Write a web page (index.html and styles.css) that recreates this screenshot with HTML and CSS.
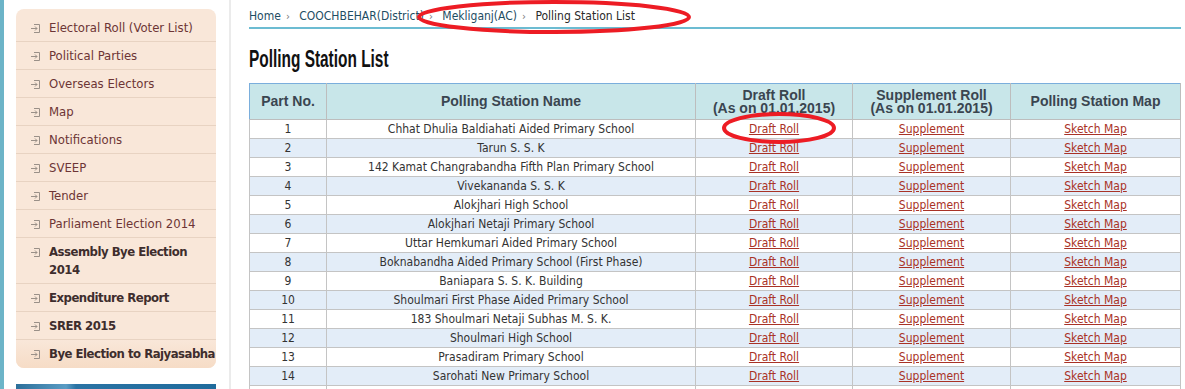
FILE: index.html
```html
<!DOCTYPE html>
<html lang="en">
<head>
  <meta charset="UTF-8">
  <title>Polling Station List</title>
  <link rel="stylesheet" href="styles.css">
</head>
<body>
  <div class="page">
    <div class="side">
      <ul class="menu">
        <li><span class="ico"><svg width="11" height="11" viewBox="0 0 11 11"><path d="M4 1.5H9.5V9.5H4M1 5.5H7M5 3.5L7 5.5L5 7.5" fill="none" stroke="#9a9088" stroke-width="1"/></svg></span>Electoral Roll (Voter List)</li>
        <li><span class="ico"><svg width="11" height="11" viewBox="0 0 11 11"><path d="M4 1.5H9.5V9.5H4M1 5.5H7M5 3.5L7 5.5L5 7.5" fill="none" stroke="#9a9088" stroke-width="1"/></svg></span>Political Parties</li>
        <li><span class="ico"><svg width="11" height="11" viewBox="0 0 11 11"><path d="M4 1.5H9.5V9.5H4M1 5.5H7M5 3.5L7 5.5L5 7.5" fill="none" stroke="#9a9088" stroke-width="1"/></svg></span>Overseas Electors</li>
        <li><span class="ico"><svg width="11" height="11" viewBox="0 0 11 11"><path d="M4 1.5H9.5V9.5H4M1 5.5H7M5 3.5L7 5.5L5 7.5" fill="none" stroke="#9a9088" stroke-width="1"/></svg></span>Map</li>
        <li><span class="ico"><svg width="11" height="11" viewBox="0 0 11 11"><path d="M4 1.5H9.5V9.5H4M1 5.5H7M5 3.5L7 5.5L5 7.5" fill="none" stroke="#9a9088" stroke-width="1"/></svg></span>Notifications</li>
        <li><span class="ico"><svg width="11" height="11" viewBox="0 0 11 11"><path d="M4 1.5H9.5V9.5H4M1 5.5H7M5 3.5L7 5.5L5 7.5" fill="none" stroke="#9a9088" stroke-width="1"/></svg></span>SVEEP</li>
        <li><span class="ico"><svg width="11" height="11" viewBox="0 0 11 11"><path d="M4 1.5H9.5V9.5H4M1 5.5H7M5 3.5L7 5.5L5 7.5" fill="none" stroke="#9a9088" stroke-width="1"/></svg></span>Tender</li>
        <li><span class="ico"><svg width="11" height="11" viewBox="0 0 11 11"><path d="M4 1.5H9.5V9.5H4M1 5.5H7M5 3.5L7 5.5L5 7.5" fill="none" stroke="#9a9088" stroke-width="1"/></svg></span>Parliament Election 2014</li>
        <li class="bold"><span class="ico"><svg width="11" height="11" viewBox="0 0 11 11"><path d="M4 1.5H9.5V9.5H4M1 5.5H7M5 3.5L7 5.5L5 7.5" fill="none" stroke="#9a9088" stroke-width="1"/></svg></span>Assembly Bye Election 2014</li>
        <li class="bold"><span class="ico"><svg width="11" height="11" viewBox="0 0 11 11"><path d="M4 1.5H9.5V9.5H4M1 5.5H7M5 3.5L7 5.5L5 7.5" fill="none" stroke="#9a9088" stroke-width="1"/></svg></span>Expenditure Report</li>
        <li class="bold"><span class="ico"><svg width="11" height="11" viewBox="0 0 11 11"><path d="M4 1.5H9.5V9.5H4M1 5.5H7M5 3.5L7 5.5L5 7.5" fill="none" stroke="#9a9088" stroke-width="1"/></svg></span>SRER 2015</li>
        <li class="bold last"><span class="ico"><svg width="11" height="11" viewBox="0 0 11 11"><path d="M4 1.5H9.5V9.5H4M1 5.5H7M5 3.5L7 5.5L5 7.5" fill="none" stroke="#9a9088" stroke-width="1"/></svg></span>Bye Election to Rajyasabha</li>
      </ul>
      <div class="banner"></div>
    </div>

    <div class="main">
      <div class="crumbs">
        <a href="#">Home</a><span class="sep">&rsaquo;</span>
        <a href="#">COOCHBEHAR(District)</a><span class="sep">&rsaquo;</span>
        <a href="#">Mekliganj(AC)</a><span class="sep">&rsaquo;</span>
        <span class="cur">Polling Station List</span>
      </div>

      <h1><span>Polling Station List</span></h1>

      <table class="ps">
        <thead>
          <tr>
            <th class="c1">Part No.</th>
            <th class="c2">Polling Station Name</th>
            <th class="c3">Draft Roll<br>(As on 01.01.2015)</th>
            <th class="c4">Supplement Roll<br>(As on 01.01.2015)</th>
            <th class="c5">Polling Station Map</th>
          </tr>
        </thead>
        <tbody id="rows"></tbody>
      </table>
    </div>
  </div>

  <svg class="marks" width="1185" height="389" viewBox="0 0 1185 389">
    <ellipse cx="554" cy="17" rx="135" ry="15" fill="none" stroke="#ed1c24" stroke-width="4"/>
    <ellipse cx="779" cy="128" rx="55" ry="14" fill="none" stroke="#ed1c24" stroke-width="4"/>
  </svg>

  <script>
    // polling stations of Mekliganj(AC)
    const stations = [
      'Chhat Dhulia Baldiahati Aided Primary School',
      'Tarun S. S. K',
      '142 Kamat Changrabandha Fifth Plan Primary School',
      'Vivekananda S. S. K',
      'Alokjhari High School',
      'Alokjhari Netaji Primary School',
      'Uttar Hemkumari Aided Primary School',
      'Boknabandha Aided Primary School (First Phase)',
      'Baniapara S. S. K. Building',
      'Shoulmari First Phase Aided Primary School',
      '183 Shoulmari Netaji Subhas M. S. K.',
      'Shoulmari High School',
      'Prasadiram Primary School',
      'Sarohati New Primary School',
      ''
    ];

    const tbody = document.getElementById('rows');
    stations.forEach((name, i) => {
      const tr = document.createElement('tr');
      if (!name) {
        tr.innerHTML = '<td></td><td></td><td></td><td></td><td></td>';
      } else {
        tr.innerHTML =
          '<td>' + (i + 1) + '</td>' +
          '<td>' + name + '</td>' +
          '<td><a href="#">Draft Roll</a></td>' +
          '<td><a href="#">Supplement</a></td>' +
          '<td><a href="#">Sketch Map</a></td>';
      }
      tbody.appendChild(tr);
    });
  </script>
</body>
</html>
```

FILE: styles.css
```css
* {
  margin: 0;
  padding: 0;
  box-sizing: border-box;
}

body {
  font-family: "DejaVu Sans Condensed", "DejaVu Sans", sans-serif;
  background: #fff;
  color: #333;
  overflow: hidden;
}

.page {
  display: flex;
  min-height: 389px;
  border-left: 4px solid #6cb4c8;
}

.side {
  width: 228px;
  padding: 9px 0 0 12px;
  border-right: 2px solid #ebebeb;
}

.menu {
  list-style: none;
  width: 200px;
  background: #f9e7d9;
  border-radius: 8px;
  overflow: hidden;
}

.menu li {
  display: flex;
  align-items: flex-start;
  padding: 5px 0 4px 14px;
  line-height: 18px;
  font-size: 13px;
  color: #6d3535;
  border-bottom: 1px solid #e8d3c2;
}

.menu li:first-child {
  padding-top: 10px;
}

.menu li.bold {
  font-weight: bold;
  color: #3e2d2d;
  letter-spacing: -0.5px;
}

.menu li.last {
  border-bottom: none;
  white-space: nowrap;
  padding-bottom: 5px;
  background: linear-gradient(#f9e7d9, #f6dcc6);
}

.ico {
  width: 19px;
  flex: none;
  padding-top: 4px;
  line-height: 0;
}

.banner {
  width: 200px;
  height: 20px;
  margin-top: 16px;
  background: linear-gradient(90deg, #2c6f9a 0%, #5a9cc4 25%, #2a73a4 30%, #1f6b9c 100%);
}

.main {
  flex: 1;
  padding: 9px 4px 0 18px;
}

.crumbs {
  font-size: 12px;
  height: 20px;
  border-bottom: 2px solid #6cbcd2;
  white-space: nowrap;
}

.crumbs a {
  color: #1e4d63;
  text-decoration: none;
}

.crumbs .sep {
  color: #777;
  font-size: 11px;
  margin: 0 6px 0 5px;
}

.crumbs .cur {
  color: #2a2a2a;
}

h1 {
  font-family: "Liberation Sans", Arial, sans-serif;
  font-size: 23px;
  font-weight: bold;
  color: #111;
  height: 26px;
  line-height: 26px;
  margin: 17px 0 11px;
  white-space: nowrap;
}

h1 span {
  display: inline-block;
  transform: scaleX(0.67);
  transform-origin: left center;
}

.ps {
  width: 931px;
  border-collapse: collapse;
  table-layout: fixed;
  font-size: 12px;
}

.ps th {
  background: #c8e6e9;
  font-family: "Liberation Sans", Arial, sans-serif;
  font-size: 14px;
  font-weight: bold;
  color: #3a4550;
  line-height: 13px;
  height: 36px;
  border: 1px solid #bdbdbd;
  border-top-color: #7aaedc;
}

.ps th.c1 {
  border-left-color: #7aaedc;
}

.c1 { width: 77px; }
.c2 { width: 369px; }
.c3 { width: 157px; }
.c4 { width: 158px; }
.c5 { width: 170px; }

.ps td {
  text-align: center;
  height: 19px;
  color: #333;
  border: 1px solid #c4c4c4;
  white-space: nowrap;
}

.ps tbody tr:nth-child(even) td {
  background: #e3edf8;
}

.ps td a {
  color: #a93226;
}

.marks {
  position: absolute;
  left: 0;
  top: 0;
  pointer-events: none;
}
```
